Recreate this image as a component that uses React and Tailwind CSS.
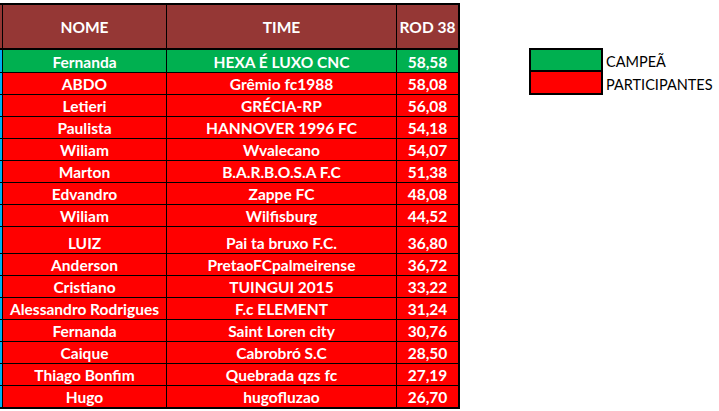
import React from 'react';

const rows = [
  { nome: 'Fernanda', time: 'HEXA É LUXO CNC', pts: '58,58', champ: true },
  { nome: 'ABDO', time: 'Grêmio fc1988', pts: '58,08' },
  { nome: 'Letieri', time: 'GRÉCIA-RP', pts: '56,08' },
  { nome: 'Paulista', time: 'HANNOVER 1996 FC', pts: '54,18' },
  { nome: 'Wiliam', time: 'Wvalecano', pts: '54,07' },
  { nome: 'Marton', time: 'B.A.R.B.O.S.A F.C', pts: '51,38' },
  { nome: 'Edvandro', time: 'Zappe FC', pts: '48,08' },
  { nome: 'Wiliam', time: 'Wilfisburg', pts: '44,52' },
  { nome: 'LUIZ', time: 'Pai ta bruxo F.C.', pts: '36,80', tall: true },
  { nome: 'Anderson', time: 'PretaoFCpalmeirense', pts: '36,72' },
  { nome: 'Cristiano', time: 'TUINGUI 2015', pts: '33,22' },
  { nome: 'Alessandro Rodrigues', time: 'F.c ELEMENT', pts: '31,24' },
  { nome: 'Fernanda', time: 'Saint Loren city', pts: '30,76' },
  { nome: 'Caique', time: 'Cabrobró S.C', pts: '28,50' },
  { nome: 'Thiago Bonfim', time: 'Quebrada qzs fc', pts: '27,19' },
  { nome: 'Hugo', time: 'hugofluzao', pts: '26,70', last: true },
];

const Row = ({ nome, time, pts, champ, tall, last }) => {
  const bg = champ ? 'bg-[#00b050]' : 'bg-[#ff0000]';
  const h = champ ? 'h-[23px]' : tall ? 'h-[27px]' : last ? 'h-[23px]' : 'h-[22px]';
  const border = last ? 'border-b-2' : 'border-b';
  const align = tall ? 'items-end pb-[2px]' : 'items-center pt-[3px]';
  return (
    <div className={`flex ${h} ${border} border-black ${bg}`}>
      <div className="w-[2px] bg-[#00b0f0]" />
      <div className={`flex w-[164px] justify-center border-l border-black ${align}`}>{nome}</div>
      <div className={`flex w-[230px] justify-center border-l border-black ${align}`}>{time}</div>
      <div className={`flex w-[62px] justify-center border-l border-black ${align}`}>{pts}</div>
      <div className="w-[2px] bg-black" />
    </div>
  );
};

export default function App() {
  return (
    <div className="flex h-[411px] w-[719px] items-start bg-white font-['Lato',sans-serif]">
      <div className="mt-[3px] w-[460px] text-[15.5px] font-bold leading-none text-white">
        <div className="flex h-[47px] border-y-2 border-black bg-[#953735]">
          <div className="w-[2px]" />
          <div className="flex w-[164px] items-center justify-center border-l border-black pt-[3px]">NOME</div>
          <div className="flex w-[230px] items-center justify-center border-l border-black pt-[3px]">TIME</div>
          <div className="flex w-[62px] items-center justify-center border-l border-black pt-[3px]">ROD 38</div>
          <div className="w-[2px] bg-black" />
        </div>
        {rows.map((r, i) => (
          <Row key={i} {...r} />
        ))}
      </div>
      <div className="ml-[69px] mt-[48px] flex items-start">
        <div className="w-[74px] border-2 border-black">
          <div className="h-[22px] border-b-2 border-black bg-[#00b050]" />
          <div className="h-[21px] bg-[#ff0000]" />
        </div>
        <div className="ml-[3px] pt-[2px] text-[14.5px] leading-[23px] text-black">
          <div>CAMPEÃ</div>
          <div>PARTICIPANTES</div>
        </div>
      </div>
    </div>
  );
}
